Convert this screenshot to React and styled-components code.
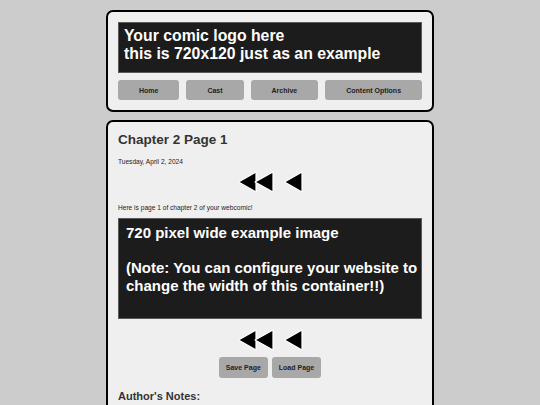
import React from 'react';
import styled, { createGlobalStyle } from 'styled-components';

const GlobalStyle = createGlobalStyle`
  html, body {
    margin: 0;
    padding: 0;
    background-color: #cccccc;
  }
  body {
    font-family: "Liberation Sans", Arial, sans-serif;
    color: #333;
    -webkit-font-smoothing: antialiased;
  }
`;

const Page = styled.div`
  width: 328px;
  margin: 0 auto;
  padding-top: 10px;
  display: flex;
  flex-direction: column;
  gap: 8px;
`;

const Panel = styled.div`
  background-color: #efefef;
  border: 2px solid #000;
  border-radius: 7px;
  padding: 10px;
`;

const Banner = styled.div`
  background-color: #1c1c1c;
  border: 1px solid #5a5a5a;
  box-sizing: border-box;
  width: 304px;
  height: ${(p) => p.$h}px;
  padding: ${(p) => p.$pad};
  color: #fff;
  font-family: "Liberation Sans", Arial, sans-serif;
  font-weight: bold;
  font-size: ${(p) => p.$size}px;
  line-height: ${(p) => p.$lh}px;
  white-space: pre-line;
`;

const Nav = styled.nav`
  display: flex;
  gap: 7px;
  margin-top: 7px;
`;

const NavButton = styled.button`
  flex: 1 1 auto;
  height: 20px;
  border: none;
  border-radius: 3px;
  background-color: #a8a8a8;
  color: #222;
  font-family: "Liberation Sans", Arial, sans-serif;
  font-weight: bold;
  font-size: 7px;
  padding: 0 20px;
`;

const Title = styled.h1`
  margin: 0;
  font-size: 13.5px;
  line-height: 16px;
  font-weight: bold;
  color: #333;
`;

const Small = styled.p`
  margin: ${(p) => p.$m};
  font-size: 6.6px;
  line-height: 9px;
  color: #222;
`;

const Arrows = styled.div`
  display: flex;
  justify-content: center;
  gap: 8px;
  margin: ${(p) => p.$m};
`;

const Buttons = styled.div`
  display: flex;
  justify-content: center;
  gap: 4px;
  margin-top: 6px;
`;

const PageButton = styled.button`
  height: 21px;
  border: none;
  border-radius: 3px;
  background-color: #a8a8a8;
  color: #222;
  font-family: "Liberation Sans", Arial, sans-serif;
  font-weight: bold;
  font-size: 7px;
  padding: 0 7px;
`;

const Notes = styled.h3`
  margin: 12px 0 0;
  font-size: 11px;
  line-height: 13px;
  font-weight: bold;
  color: #333;
`;

const First = () => (
  <svg width="38" height="22" viewBox="0 0 38 22">
    <polygon points="1.5,11 19,1 19,21" fill="#000" stroke="#fff" strokeWidth="1.2" strokeLinejoin="round" />
    <polygon points="18,11 36,1 36,21" fill="#000" stroke="#fff" strokeWidth="1.2" strokeLinejoin="round" />
  </svg>
);

const Prev = () => (
  <svg width="20" height="22" viewBox="0 0 20 22">
    <polygon points="1.5,11 19,1 19,21" fill="#000" stroke="#fff" strokeWidth="1.2" strokeLinejoin="round" />
  </svg>
);

const ComicNav = ({ m }) => (
  <Arrows $m={m}>
    <First />
    <Prev />
  </Arrows>
);

const App = () => (
  <>
    <GlobalStyle />
    <Page>
      <Panel>
        <Banner $h={51} $pad="4px 5px" $size={15.8} $lh={18}>
          {'Your comic logo here\nthis is 720x120 just as an example'}
        </Banner>
        <Nav>
          <NavButton>Home</NavButton>
          <NavButton>Cast</NavButton>
          <NavButton>Archive</NavButton>
          <NavButton>Content Options</NavButton>
        </Nav>
      </Panel>
      <Panel>
        <Title>Chapter 2 Page 1</Title>
        <Small $m="9px 0 0">Tuesday, April 2, 2024</Small>
        <ComicNav m="5px 0 0" />
        <Small $m="10px 0 6px">Here is page 1 of chapter 2 of your webcomic!</Small>
        <Banner $h={101} $pad="5px 2px 4px 7px" $size={15} $lh={17.5}>
          {'720 pixel wide example image\n\n(Note: You can configure your website to change the width of this container!!)'}
        </Banner>
        <ComicNav m="10px 0 0" />
        <Buttons>
          <PageButton>Save Page</PageButton>
          <PageButton>Load Page</PageButton>
        </Buttons>
        <Notes>Author's Notes:</Notes>
      </Panel>
    </Page>
  </>
);

export default App;
